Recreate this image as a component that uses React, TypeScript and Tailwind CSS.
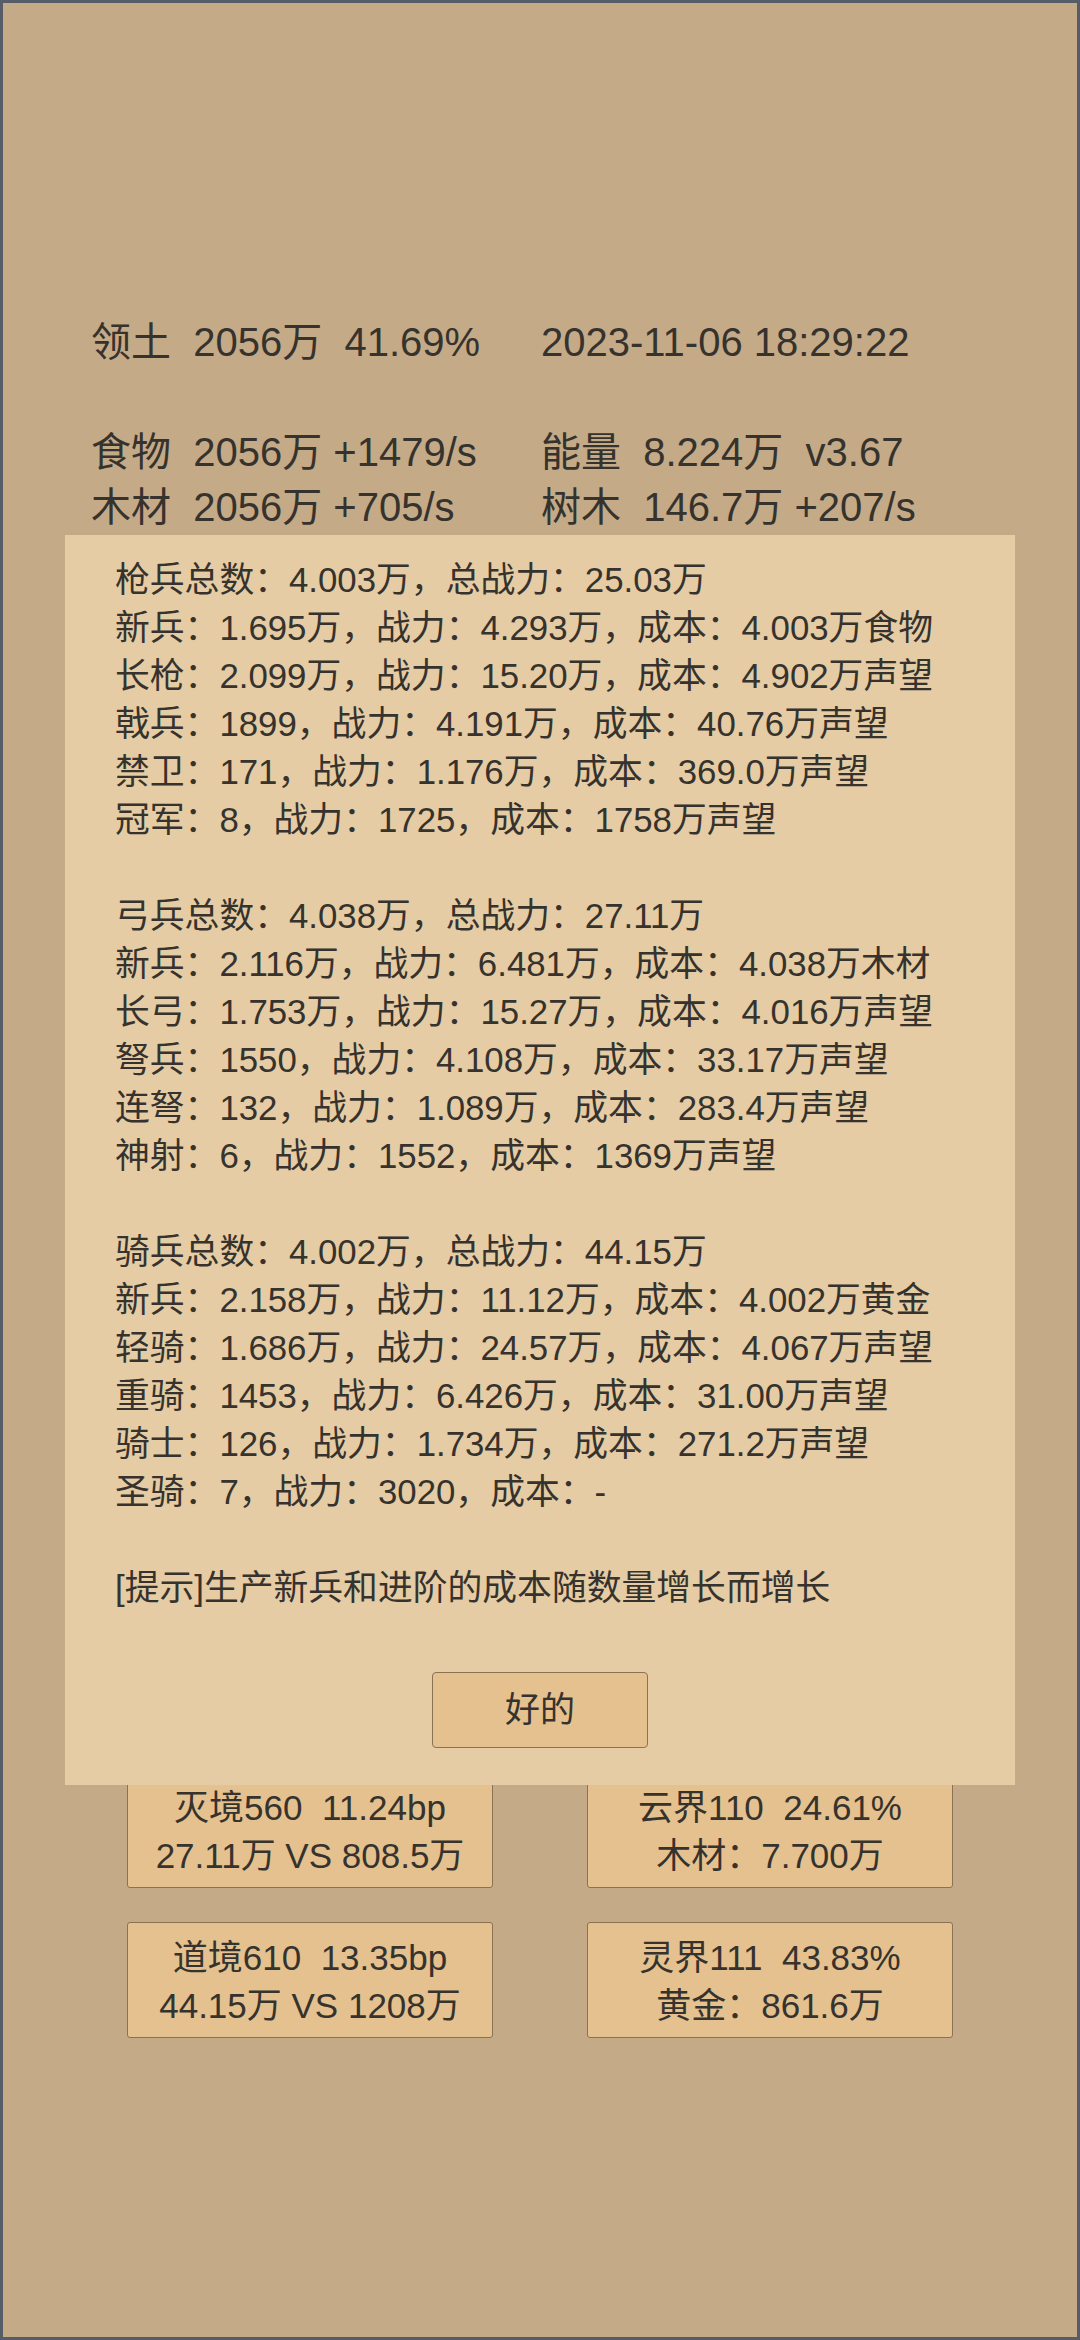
import React from "react";

const dialogLines = [
  "枪兵总数：4.003万，总战力：25.03万",
  "新兵：1.695万，战力：4.293万，成本：4.003万食物",
  "长枪：2.099万，战力：15.20万，成本：4.902万声望",
  "戟兵：1899，战力：4.191万，成本：40.76万声望",
  "禁卫：171，战力：1.176万，成本：369.0万声望",
  "冠军：8，战力：1725，成本：1758万声望",
  "",
  "弓兵总数：4.038万，总战力：27.11万",
  "新兵：2.116万，战力：6.481万，成本：4.038万木材",
  "长弓：1.753万，战力：15.27万，成本：4.016万声望",
  "弩兵：1550，战力：4.108万，成本：33.17万声望",
  "连弩：132，战力：1.089万，成本：283.4万声望",
  "神射：6，战力：1552，成本：1369万声望",
  "",
  "骑兵总数：4.002万，总战力：44.15万",
  "新兵：2.158万，战力：11.12万，成本：4.002万黄金",
  "轻骑：1.686万，战力：24.57万，成本：4.067万声望",
  "重骑：1453，战力：6.426万，成本：31.00万声望",
  "骑士：126，战力：1.734万，成本：271.2万声望",
  "圣骑：7，战力：3020，成本：-",
  "",
  "[提示]生产新兵和进阶的成本随数量增长而增长",
];

const cards = [
  ["灭境560  11.24bp", "27.11万 VS 808.5万"],
  ["云界110  24.61%", "木材：7.700万"],
  ["道境610  13.35bp", "44.15万 VS 1208万"],
  ["灵界111  43.83%", "黄金：861.6万"],
];

export default function App() {
  return (
    <div className="relative box-border h-[2340px] w-[1080px] overflow-hidden border-[3px] border-[#565c68] bg-[#c4aa87] font-['Liberation_Sans','Noto_Sans_CJK_SC',sans-serif] text-[#36322d]">
      <div className="pl-[88px] pt-[312px]">
        <div className="grid grid-cols-[450px_450px] whitespace-pre text-[40px] leading-[55px]">
          <div>领土  2056万  41.69%</div>
          <div>2023-11-06 18:29:22</div>
          <div className="h-[55px]"></div>
          <div className="h-[55px]"></div>
          <div>食物  2056万 +1479/s</div>
          <div>能量  8.224万  v3.67</div>
          <div>木材  2056万 +705/s</div>
          <div>树木  146.7万 +207/s</div>
        </div>
      </div>

      <div className="mt-[1237px] grid grid-cols-[366px_366px] gap-x-[94px] gap-y-[34px] px-[124px]">
        {cards.map((c, i) => (
          <div
            key={i}
            className="box-border h-[116px] rounded-[3px] border border-[#8a7252] bg-[#e4c18f] pt-[11px] text-center whitespace-pre text-[35px] leading-[48px]"
          >
            <div>{c[0]}</div>
            <div>{c[1]}</div>
          </div>
        ))}
      </div>

      <div className="absolute left-[62px] top-[532px] box-border flex h-[1250px] w-[950px] flex-col bg-[#e5cca4] pl-[50px] pt-[21px]">
        <div className="whitespace-pre text-[34.8px] leading-[48px]">
          {dialogLines.map((l, i) => (
            <div key={i} className="h-[48px]">
              {l}
            </div>
          ))}
        </div>
        <div className="mt-[60px] flex justify-center pr-[50px]">
          <div className="box-border flex h-[76px] w-[216px] items-center justify-center rounded-[4px] border border-[#8a7252] bg-[#e4c18f] text-[35px] leading-[48px]">
            好的
          </div>
        </div>
      </div>
    </div>
  );
}
